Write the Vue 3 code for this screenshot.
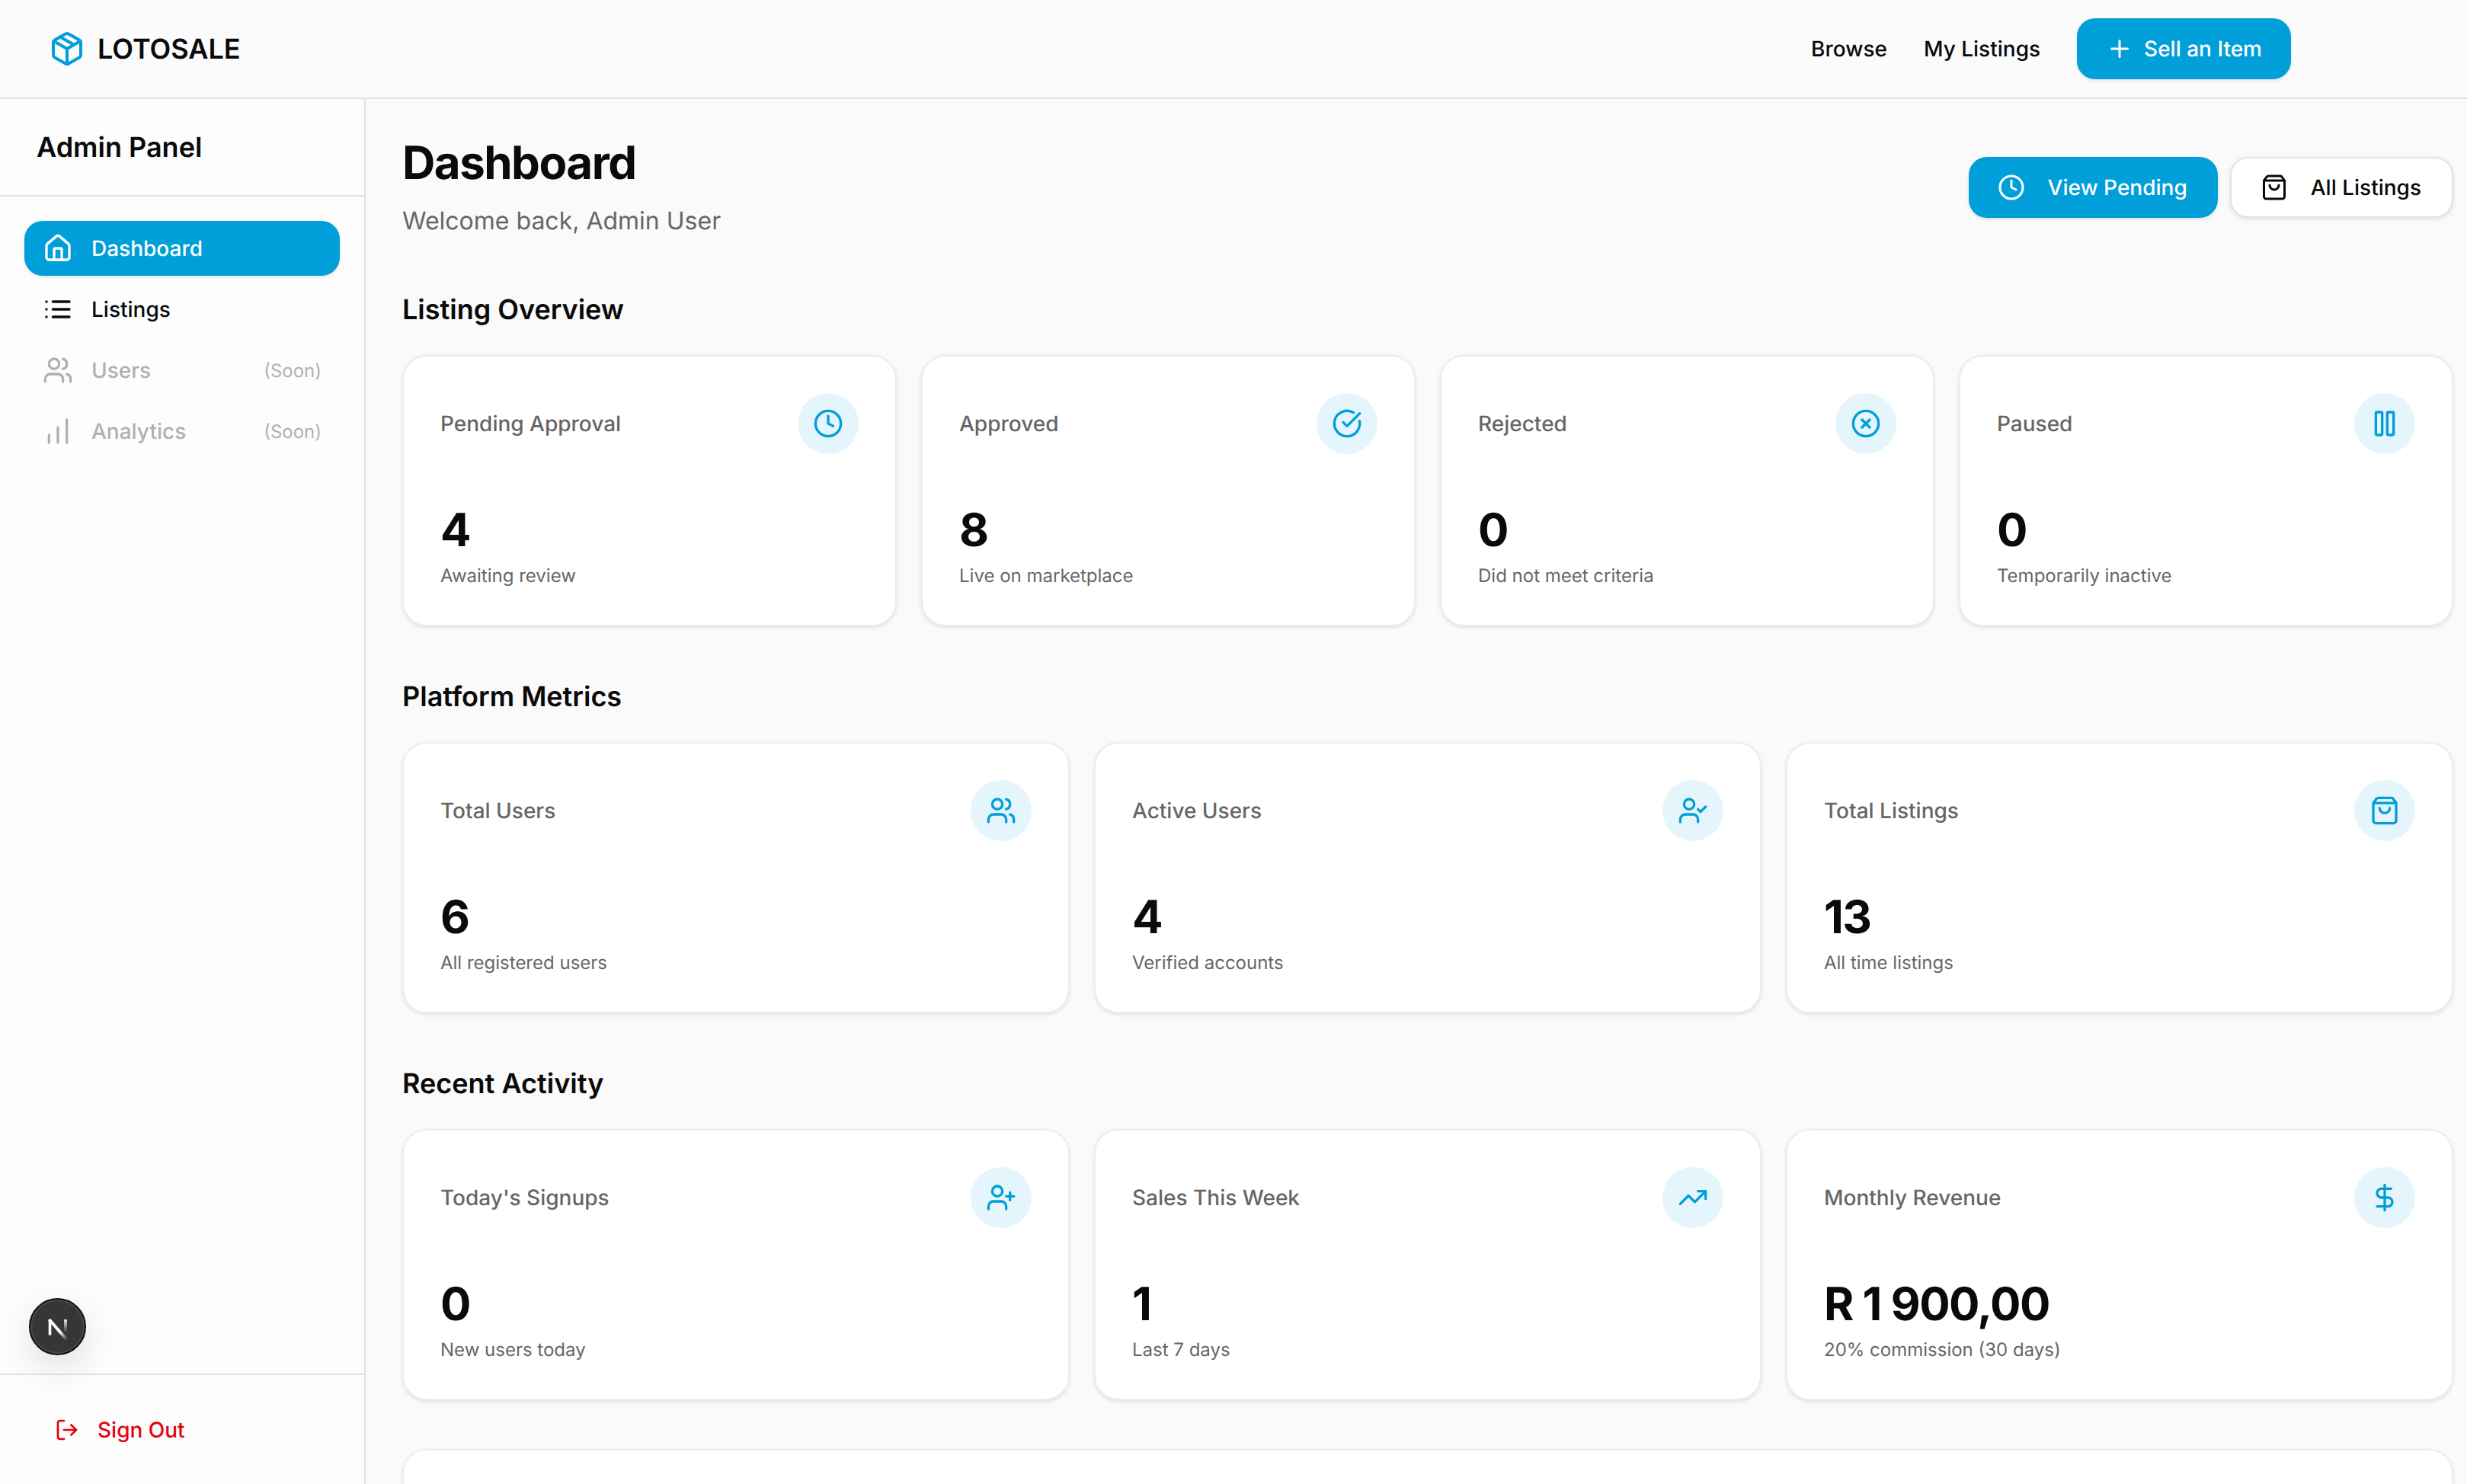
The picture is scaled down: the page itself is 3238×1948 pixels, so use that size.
<script setup>
const overview = [
  { label: 'Pending Approval', value: '4', sub: 'Awaiting review', icon: 'clock' },
  { label: 'Approved', value: '8', sub: 'Live on marketplace', icon: 'check' },
  { label: 'Rejected', value: '0', sub: 'Did not meet criteria', icon: 'x' },
  { label: 'Paused', value: '0', sub: 'Temporarily inactive', icon: 'pause' }
]
const metrics = [
  { label: 'Total Users', value: '6', sub: 'All registered users', icon: 'users' },
  { label: 'Active Users', value: '4', sub: 'Verified accounts', icon: 'userCheck' },
  { label: 'Total Listings', value: '13', sub: 'All time listings', icon: 'bag' }
]
const activity = [
  { label: "Today's Signups", value: '0', sub: 'New users today', icon: 'userPlus' },
  { label: 'Sales This Week', value: '1', sub: 'Last 7 days', icon: 'trend' },
  { label: 'Monthly Revenue', value: 'R 1 900,00', sub: '20% commission (30 days)', icon: 'dollar' }
]
const sections = [
  { title: 'Listing Overview', cols: 'four', cards: overview },
  { title: 'Platform Metrics', cols: 'three', cards: metrics },
  { title: 'Recent Activity', cols: 'three', cards: activity }
]
const userBody = 'M16 21v-2a4 4 0 0 0-4-4H6a4 4 0 0 0-4 4v2'
const bag = 'M3.4 5.467a2 2 0 0 0-.4 1.2V20a2 2 0 0 0 2 2h14a2 2 0 0 0 2-2V6.667a2 2 0 0 0-.4-1.2l-2.4-3.2A2 2 0 0 0 17 2H7a2 2 0 0 0-1.6.8z'
const icons = {
  clock: ['M12 2a10 10 0 1 0 0 20a10 10 0 1 0 0-20z', 'M12 6v6l4 2'],
  check: ['M21.801 10A10 10 0 1 1 17 3.335', 'm9 11 3 3L22 4'],
  x: ['M12 2a10 10 0 1 0 0 20a10 10 0 1 0 0-20z', 'm15 9-6 6', 'm9 9 6 6'],
  pause: ['M6 3h3a1 1 0 0 1 1 1v16a1 1 0 0 1-1 1H6a1 1 0 0 1-1-1V4a1 1 0 0 1 1-1z', 'M15 3h3a1 1 0 0 1 1 1v16a1 1 0 0 1-1 1h-3a1 1 0 0 1-1-1V4a1 1 0 0 1 1-1z'],
  users: [userBody, 'M9 3a4 4 0 1 0 0 8a4 4 0 1 0 0-8z', 'M22 21v-2a4 4 0 0 0-3-3.87', 'M16 3.13a4 4 0 0 1 0 7.75'],
  userCheck: [userBody, 'M9 3a4 4 0 1 0 0 8a4 4 0 1 0 0-8z', 'm16 11 2 2 4-4'],
  userPlus: [userBody, 'M9 3a4 4 0 1 0 0 8a4 4 0 1 0 0-8z', 'M19 8v6', 'M22 11h-6'],
  bag: ['M16 10a4 4 0 0 1-8 0', 'M3.103 6.034h17.794', bag],
  trend: ['M22 7 13.5 15.5l-5-5L2 17', 'M16 7h6v6'],
  dollar: ['M12 2v20', 'M17 5H9.5a3.5 3.5 0 0 0 0 7h5a3.5 3.5 0 0 1 0 7H6'],
  house: ['M15 21v-8a1 1 0 0 0-1-1h-4a1 1 0 0 0-1 1v8', 'M3 10a2 2 0 0 1 .709-1.528l7-5.999a2 2 0 0 1 2.582 0l7 5.999A2 2 0 0 1 21 10v9a2 2 0 0 1-2 2H5a2 2 0 0 1-2-2z'],
  list: ['M3 12h.01', 'M3 18h.01', 'M3 6h.01', 'M8 12h13', 'M8 18h13', 'M8 6h13'],
  chart: ['M5 21v-6', 'M12 21V9', 'M19 21V3'],
  plus: ['M5 12h14', 'M12 5v14'],
  logout: ['M9 21H5a2 2 0 0 1-2-2V5a2 2 0 0 1 2-2h4', 'm16 17 5-5-5-5', 'M21 12H9'],
  box: ['M11 21.73a2 2 0 0 0 2 0l7-4A2 2 0 0 0 21 16V8a2 2 0 0 0-1-1.73l-7-4a2 2 0 0 0-2 0l-7 4A2 2 0 0 0 3 8v8a2 2 0 0 0 1 1.73z', 'M12 22V12', 'M3.29 7 12 12l8.71-5', 'm7.5 4.27 9 5.15']
}
const nav = [
  { label: 'Dashboard', icon: 'house', active: true },
  { label: 'Listings', icon: 'list' },
  { label: 'Users', icon: 'users', soon: true },
  { label: 'Analytics', icon: 'chart', soon: true }
]
</script>

<template>
  <div class="app">
    <header class="topbar">
      <div class="brand">
        <svg class="ico brand-ico" viewBox="0 0 24 24"><path v-for="d in icons.box" :key="d" :d="d" /></svg>
        <span>LOTOSALE</span>
      </div>
      <nav class="topnav">
        <a>Browse</a>
        <a>My Listings</a>
        <button class="btn primary sell">
          <svg class="ico btn-ico" viewBox="0 0 24 24"><path v-for="d in icons.plus" :key="d" :d="d" /></svg>
          Sell an Item
        </button>
      </nav>
    </header>

    <div class="body">
      <aside class="sidebar">
        <div class="side-title">Admin Panel</div>
        <ul class="side-nav">
          <li v-for="item in nav" :key="item.label" class="side-item" :class="{ active: item.active, soon: item.soon }">
            <svg class="ico side-ico" viewBox="0 0 24 24"><path v-for="d in icons[item.icon]" :key="d" :d="d" /></svg>
            <span class="side-label">{{ item.label }}</span>
            <span v-if="item.soon" class="soon-tag">(Soon)</span>
          </li>
        </ul>
        <div class="side-foot">
          <button class="signout">
            <svg class="ico out-ico" viewBox="0 0 24 24"><path v-for="d in icons.logout" :key="d" :d="d" /></svg>
            Sign Out
          </button>
        </div>
        <div class="dev-badge">
          <svg viewBox="0 0 40 40" width="40" height="40">
            <defs>
              <linearGradient id="ndiag" gradientUnits="userSpaceOnUse" x1="9" y1="10" x2="32" y2="37">
                <stop offset="0.6" stop-color="#fff" />
                <stop offset="1" stop-color="#fff" stop-opacity="0" />
              </linearGradient>
              <linearGradient id="nstem" gradientUnits="userSpaceOnUse" x1="0" y1="10" x2="0" y2="27">
                <stop offset="0" stop-color="#fff" />
                <stop offset="1" stop-color="#fff" stop-opacity="0" />
              </linearGradient>
            </defs>
            <path d="M9.5 10v20.5" stroke="#fff" stroke-width="3.6" fill="none" />
            <path d="M8.5 10 32 37" stroke="url(#ndiag)" stroke-width="4" fill="none" />
            <path d="M30 10v17" stroke="url(#nstem)" stroke-width="3.6" fill="none" />
          </svg>
        </div>
      </aside>

      <main class="main">
        <div class="page-head">
          <div>
            <h1>Dashboard</h1>
            <p>Welcome back, Admin User</p>
          </div>
          <div class="actions">
            <button class="btn primary wide">
              <svg class="ico btn-ico" viewBox="0 0 24 24"><path v-for="d in icons.clock" :key="d" :d="d" /></svg>
              View Pending
            </button>
            <button class="btn outline wide">
              <svg class="ico btn-ico" viewBox="0 0 24 24"><path v-for="d in icons.bag" :key="d" :d="d" /></svg>
              All Listings
            </button>
          </div>
        </div>

        <section v-for="s in sections" :key="s.title" class="section">
          <h2>{{ s.title }}</h2>
          <div class="grid" :class="s.cols">
            <div v-for="c in s.cards" :key="c.label" class="card">
              <div class="card-top">
                <span class="card-label">{{ c.label }}</span>
                <span class="card-icon">
                  <svg class="ico card-ico" viewBox="0 0 24 24"><path v-for="d in icons[c.icon]" :key="d" :d="d" /></svg>
                </span>
              </div>
              <div class="card-value">{{ c.value }}</div>
              <div class="card-sub">{{ c.sub }}</div>
            </div>
          </div>
        </section>

        <div class="card extra"></div>
      </main>
    </div>
  </div>
</template>

<style>
html, body { margin: 0; background: #fafafa; overflow: hidden; }
</style>

<style scoped>
.app {
  height: 1948px;
  display: flex;
  flex-direction: column;
  overflow: hidden;
  font-family: Inter, "Liberation Sans", sans-serif;
  text-rendering: geometricPrecision;
  color: #0a0a0a;
  background: #fafafa;
}
.ico {
  fill: none;
  stroke: currentColor;
  stroke-width: 2;
  stroke-linecap: round;
  stroke-linejoin: round;
  flex: none;
}
.topbar {
  height: 130px;
  box-sizing: border-box;
  flex: none;
  display: flex;
  align-items: center;
  justify-content: space-between;
  padding: 0 231px 0 64px;
  background: #fbfbfc;
  border-bottom: 2px solid #dfe3e8;
}
.brand { display: flex; align-items: center; gap: 16px; font-size: 36px; font-weight: 600; }
.brand-ico { width: 48px; height: 48px; color: #009fd9; }
.topnav { display: flex; align-items: center; gap: 48px; font-size: 28px; font-weight: 500; }
.btn {
  height: 80px;
  box-sizing: border-box;
  display: flex;
  align-items: center;
  border: 0;
  border-radius: 24px;
  padding: 0 40px;
  font: 500 28px Inter, "Liberation Sans", sans-serif;
  text-rendering: geometricPrecision;
}
.btn.primary { background: #009fd9; color: #fff; box-shadow: 0 2px 4px rgba(0, 0, 0, .1); }
.btn.outline {
  background: #fff;
  color: #0a0a0a;
  border: 2px solid #dfe3e8;
  padding-left: 38px;
  gap: 30px;
  box-shadow: 0 2px 6px rgba(0, 0, 0, .1);
}
.btn-ico { width: 36px; height: 36px; }
.sell { gap: 14px; padding: 0 38px; }
.wide { gap: 30px; padding-left: 38px; }
.body { flex: 1; min-height: 0; display: flex; }
.sidebar {
  position: relative;
  width: 480px;
  box-sizing: border-box;
  flex: none;
  display: flex;
  flex-direction: column;
  background: #fdfdfe;
  border-right: 2px solid #dfe3e8;
}
.side-title {
  height: 128px;
  box-sizing: border-box;
  display: flex;
  align-items: center;
  padding-left: 48px;
  font-size: 36px;
  font-weight: 600;
  border-bottom: 2px solid #dfe3e8;
}
.side-nav {
  list-style: none;
  margin: 0;
  padding: 32px 32px 0;
  flex: 1;
  display: flex;
  flex-direction: column;
  gap: 8px;
}
.side-item {
  height: 72px;
  display: flex;
  align-items: center;
  gap: 24px;
  padding: 0 24px;
  border-radius: 24px;
  font-size: 28px;
  font-weight: 500;
}
.side-item.active { background: #009fd9; color: #fff; box-shadow: 0 2px 4px rgba(0, 0, 0, .1); }
.side-item.soon { color: #b0b0b0; }
.side-ico { width: 40px; height: 40px; }
.side-label { flex: 1; }
.soon-tag { font-size: 24px; font-weight: 400; }
.side-foot { border-top: 2px solid #dfe3e8; padding: 32px 0 31px; }
.signout {
  height: 80px;
  display: flex;
  align-items: center;
  gap: 24px;
  padding: 0 0 0 72px;
  border: 0;
  background: none;
  color: #e7000b;
  font: 500 28px Inter, "Liberation Sans", sans-serif;
  text-rendering: geometricPrecision;
}
.out-ico { width: 32px; height: 32px; }
.dev-badge {
  position: absolute;
  left: 38px;
  top: 1574px;
  width: 75px;
  height: 75px;
  box-sizing: border-box;
  display: flex;
  align-items: center;
  justify-content: center;
  border-radius: 50%;
  background: #363636;
  border: 2px solid #111;
  box-shadow: inset 0 0 0 2px #4a4a4a, 0 16px 48px rgba(0, 0, 0, .12);
}
.main { flex: 1; min-width: 0; padding: 48px 18px 0 48px; overflow: hidden; }
.page-head { display: flex; align-items: center; justify-content: space-between; margin-bottom: 64px; }
h1 { margin: 0; font-size: 60px; line-height: 72px; font-weight: 700; letter-spacing: -1.5px; }
.page-head p { margin: 16px 0 0; font-size: 32px; line-height: 48px; color: #666; }
.actions { display: flex; gap: 16px; }
.section { margin-bottom: 64px; }
h2 { margin: 0 0 32px; font-size: 36px; line-height: 56px; font-weight: 600; }
.grid { display: grid; gap: 32px; }
.grid.four { grid-template-columns: repeat(4, 1fr); }
.grid.three { grid-template-columns: repeat(3, 1fr); }
.card {
  background: #fff;
  border: 2px solid #ebedef;
  border-radius: 32px;
  padding: 48px;
  box-shadow: 0 2px 6px rgba(0, 0, 0, .08), 0 2px 4px -2px rgba(0, 0, 0, .08);
}
.card-top { height: 80px; display: flex; align-items: center; justify-content: space-between; margin-bottom: 64px; }
.card-label { font-size: 28px; color: #666; font-weight: 500; }
.card-icon {
  width: 80px;
  height: 80px;
  border-radius: 50%;
  background: #e5f5fc;
  color: #009fd9;
  display: flex;
  align-items: center;
  justify-content: center;
}
.card-ico { width: 40px; height: 40px; }
.card-value { font-size: 60px; line-height: 72px; font-weight: 700; letter-spacing: -1.5px; }
.card-sub { margin-top: 8px; font-size: 24px; line-height: 32px; color: #666; }
.extra { height: 300px; }
</style>
